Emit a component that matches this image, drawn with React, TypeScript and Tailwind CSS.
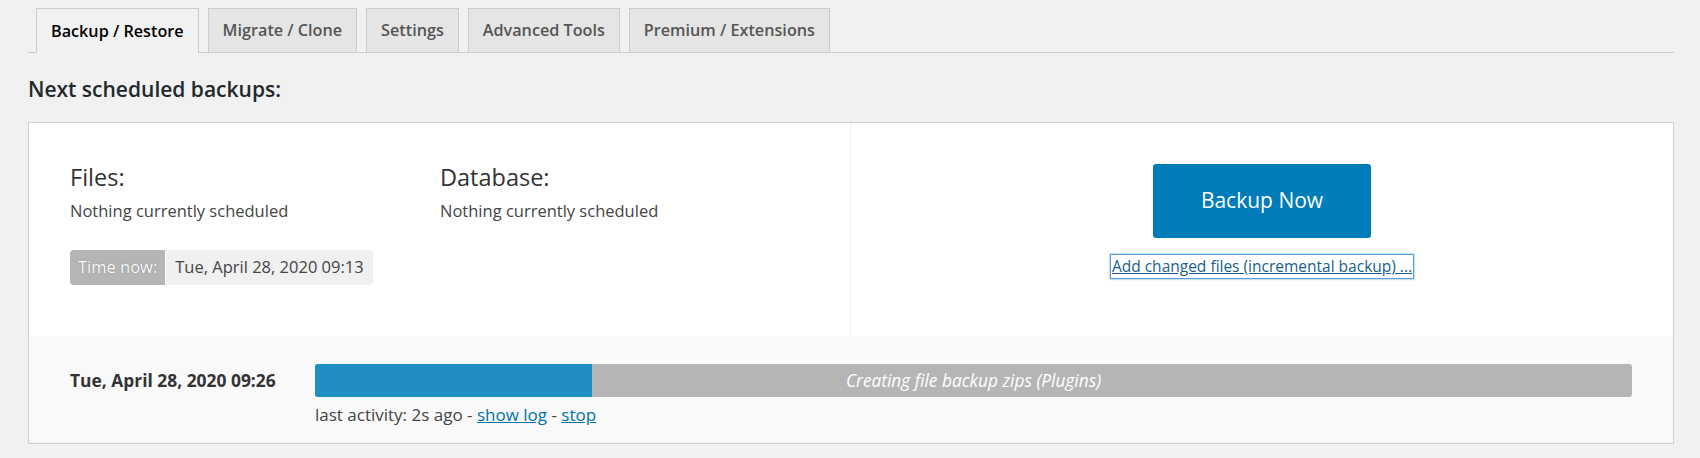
const tabs = ["Backup / Restore", "Migrate / Clone", "Settings", "Advanced Tools", "Premium / Extensions"];

export default function App() {
  return (
    <div className="min-h-[458px] bg-[#f1f1f1] pl-[28px] pr-[26px] pt-[8px] text-[#444] [font-family:'Open_Sans',sans-serif]">
      <nav className="flex h-[45px] items-end gap-[9px] border-b border-[#ccc] pl-[8px]">
        {tabs.map((t, i) => (
          <div
            key={t}
            className={
              i === 0
                ? "-mb-px flex h-[45px] items-center border border-b-0 border-[#ccc] bg-[#f1f1f1] px-[14px] text-[16.2px] font-semibold text-[#000]"
                : "flex h-[44px] items-center border border-b-0 border-[#ccc] bg-[#e5e5e5] px-[14px] text-[16.2px] font-semibold text-[#555]"
            }
          >
            {t}
          </div>
        ))}
      </nav>

      <h2 className="mt-[22px] text-[21px] font-semibold leading-[28px] text-[#23282d]">Next scheduled backups:</h2>

      <div className="mt-[19px] border border-[#ccd0d4] bg-white">
        <div className="flex h-[213px]">
          <div className="flex w-1/2 flex-col border-r border-[#f0f0f0] pl-[41px] pt-[38px]">
            <div className="flex">
              <div className="w-[370px]">
                <h3 className="text-[23.5px] leading-[32px] text-[#333]">Files:</h3>
                <p className="mt-[6px] text-[16.5px] leading-[24px]">Nothing currently scheduled</p>
              </div>
              <div>
                <h3 className="text-[23.5px] leading-[32px] text-[#333]">Database:</h3>
                <p className="mt-[6px] text-[16.5px] leading-[24px]">Nothing currently scheduled</p>
              </div>
            </div>
            <div className="mt-[27px] flex h-[35px] w-fit overflow-hidden rounded-[4px] text-[16.5px]">
              <span className="flex items-center bg-[#b5b5b5] px-[8px] text-white [text-shadow:0_0_1px_#666]">Time now:</span>
              <span className="flex items-center border-l border-white bg-[#f0f0f0] px-[9px] text-[#444]">Tue, April 28, 2020 09:13</span>
            </div>
          </div>
          <div className="flex w-1/2 flex-col items-center pt-[41px]">
            <button className="h-[74px] w-[218px] rounded-[3px] bg-[#007cba] text-[21px] text-white">Backup Now</button>
            <a
              href="#"
              className="mt-[17px] px-[1px] text-[15.5px] leading-[23px] text-[#1a5f8a] underline shadow-[0_0_0_1px_#5b9dd9,0_0_2px_1px_rgba(30,140,190,0.8)]"
            >
              Add changed files (incremental backup) ...
            </a>
          </div>
        </div>

        <div className="flex h-[107px] bg-[#f9f9f9] pl-[41px] pr-[41px] pt-[28px]">
          <div className="w-[245px] pt-[4px] text-[17.4px] font-bold leading-[24px] text-[#333]">Tue, April 28, 2020 09:26</div>
          <div className="flex-1">
            <div className="relative h-[33px] overflow-hidden rounded-[3px] bg-[#b5b5b5]">
              <div className="h-full w-[21%] bg-[#1e8ec3]" />
              <div className="absolute inset-0 flex items-center justify-center text-[17.3px] italic text-white">
                Creating file backup zips (Plugins)
              </div>
            </div>
            <div className="mt-[6px] text-[17px] leading-[24px] text-[#444]">
              last activity: 2s ago -{" "}
              <a href="#" className="text-[#0073aa] underline">show log</a> -{" "}
              <a href="#" className="text-[#0073aa] underline">stop</a>
            </div>
          </div>
        </div>
      </div>
    </div>
  );
}
